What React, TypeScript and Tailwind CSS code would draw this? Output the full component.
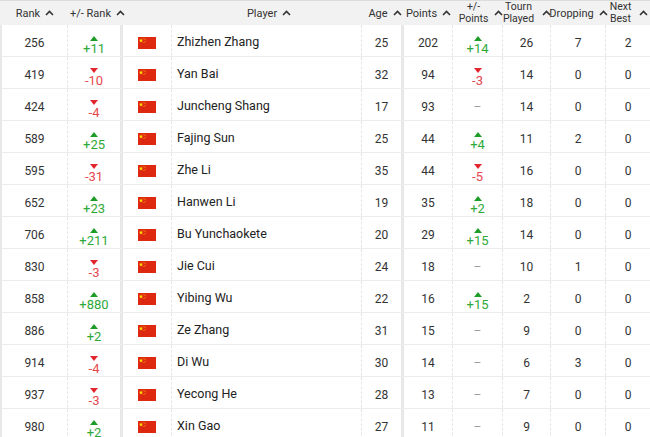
import React from "react"

type Row = {
  rank: number
  rankDelta: string
  name: string
  age: number
  points: number
  pointsDelta: string
  played: number
  dropping: number
  nextBest: number
}

const rows: Row[] = [
  { rank: 256, rankDelta: "+11", name: "Zhizhen Zhang", age: 25, points: 202, pointsDelta: "+14", played: 26, dropping: 7, nextBest: 2 },
  { rank: 419, rankDelta: "-10", name: "Yan Bai", age: 32, points: 94, pointsDelta: "-3", played: 14, dropping: 0, nextBest: 0 },
  { rank: 424, rankDelta: "-4", name: "Juncheng Shang", age: 17, points: 93, pointsDelta: "", played: 14, dropping: 0, nextBest: 0 },
  { rank: 589, rankDelta: "+25", name: "Fajing Sun", age: 25, points: 44, pointsDelta: "+4", played: 11, dropping: 2, nextBest: 0 },
  { rank: 595, rankDelta: "-31", name: "Zhe Li", age: 35, points: 44, pointsDelta: "-5", played: 16, dropping: 0, nextBest: 0 },
  { rank: 652, rankDelta: "+23", name: "Hanwen Li", age: 19, points: 35, pointsDelta: "+2", played: 18, dropping: 0, nextBest: 0 },
  { rank: 706, rankDelta: "+211", name: "Bu Yunchaokete", age: 20, points: 29, pointsDelta: "+15", played: 14, dropping: 0, nextBest: 0 },
  { rank: 830, rankDelta: "-3", name: "Jie Cui", age: 24, points: 18, pointsDelta: "", played: 10, dropping: 1, nextBest: 0 },
  { rank: 858, rankDelta: "+880", name: "Yibing Wu", age: 22, points: 16, pointsDelta: "+15", played: 2, dropping: 0, nextBest: 0 },
  { rank: 886, rankDelta: "+2", name: "Ze Zhang", age: 31, points: 15, pointsDelta: "", played: 9, dropping: 0, nextBest: 0 },
  { rank: 914, rankDelta: "-4", name: "Di Wu", age: 30, points: 14, pointsDelta: "", played: 6, dropping: 3, nextBest: 0 },
  { rank: 937, rankDelta: "-3", name: "Yecong He", age: 28, points: 13, pointsDelta: "", played: 7, dropping: 0, nextBest: 0 },
  { rank: 980, rankDelta: "+2", name: "Xin Gao", age: 27, points: 11, pointsDelta: "", played: 9, dropping: 0, nextBest: 0 },
]

const grid = "grid grid-cols-[66px_55px_49px_190px_42px_49px_50px_48px_55px_44px]"
const dashed = "border-r border-dashed border-[#e6e6e6]"
const thick = "border-r-[3px] border-solid border-[#e8e8e8]"

function Caret() {
  return (
    <svg width="9" height="6" viewBox="0 0 9 6" className="shrink-0">
      <polyline points="1,5 4.5,1.5 8,5" fill="none" stroke="#333" strokeWidth="1.6" />
    </svg>
  )
}

function Flag() {
  return (
    <svg width="18" height="12" viewBox="0 0 30 20">
      <rect width="30" height="20" fill="#de2910" />
      <polygon points="5,2 5.9,4.7 8.8,4.7 6.5,6.4 7.3,9.1 5,7.4 2.7,9.1 3.5,6.4 1.2,4.7 4.1,4.7" fill="#ffde00" />
      <circle cx="10" cy="2" r="0.8" fill="#ffde00" />
      <circle cx="12" cy="4" r="0.8" fill="#ffde00" />
      <circle cx="12" cy="7" r="0.8" fill="#ffde00" />
      <circle cx="10" cy="9" r="0.8" fill="#ffde00" />
    </svg>
  )
}

function Delta({ value }: { value: string }) {
  if (!value) {
    return <span className="text-[#9e9e9e] pt-[4px]">–</span>
  }
  const up = value.startsWith("+")
  return (
    <div className="flex flex-col items-center pt-[11px] self-start">
      <svg width="8" height="5" viewBox="0 0 8 5">
        {up ? <polygon points="0,5 4,0 8,5" fill="#1f9d2b" /> : <polygon points="0,0 8,0 4,5" fill="#e3262f" />}
      </svg>
      <span className={up ? "text-[#2fa83a] leading-[14px] text-[13px] pt-[1px]" : "text-[#e5484f] leading-[14px] text-[13px] pt-[1px]"}>{value}</span>
    </div>
  )
}

function Head({ children, className = "" }: { children: React.ReactNode; className?: string }) {
  return (
    <div className={"flex items-center justify-center gap-[5px] whitespace-nowrap " + className}>
      {children}
    </div>
  )
}

export default function App() {
  return (
    <div className="w-[650px] h-[437px] overflow-hidden bg-white text-[#333]" style={{ fontFamily: "Roboto, 'Liberation Sans', sans-serif" }}>
      <div className="border-t border-[#dcdcdc] bg-[#f2f2f2] h-[25px] pl-[2px] text-[11px] leading-[11px]">
        <div className={grid + " h-full"}>
          <Head>Rank <Caret /></Head>
          <Head className="pl-[4px]">+/- Rank <Caret /></Head>
          <div />
          <Head className="pl-[4px]">Player <Caret /></Head>
          <Head className="pl-[4px]">Age <Caret /></Head>
          <Head>Points <Caret /></Head>
          <Head className="gap-[6px] pl-[6px]">
            <span className="text-center text-[10.5px] leading-[12px]">+/-<br />Points</span>
            <Caret />
          </Head>
          <Head className="gap-[8px]">
            <span className="text-center text-[10.5px] leading-[12px]">Tourn<br />Played</span>
            <Caret />
          </Head>
          <Head>Dropping <Caret /></Head>
          <Head className="gap-[8px] pl-[2px]">
            <span className="text-center text-[10.5px] leading-[12px]">Next<br />Best</span>
            <Caret />
          </Head>
        </div>
      </div>
      <div className="border-l-2 border-[#e8e8e8] text-[12px]">
        {rows.map((r) => (
          <div key={r.rank} className={grid + " h-[32px] border-b border-[#ececec]"}>
            <div className={dashed + " flex items-center justify-center pt-[4px]"}>{r.rank}</div>
            <div className={thick + " flex justify-center"}>
              <Delta value={r.rankDelta} />
            </div>
            <div className={dashed + " flex items-center justify-center pt-[4px]"}>
              <Flag />
            </div>
            <div className={dashed + " flex items-center pl-[5px] pt-[4px] text-[12.5px] text-[#222]"}>{r.name}</div>
            <div className={thick + " flex items-center justify-center pt-[4px]"}>{r.age}</div>
            <div className={dashed + " flex items-center justify-center pt-[4px]"}>{r.points}</div>
            <div className={dashed + " flex items-center justify-center"}>
              <Delta value={r.pointsDelta} />
            </div>
            <div className={dashed + " flex items-center justify-center pt-[4px]"}>{r.played}</div>
            <div className={dashed + " flex items-center justify-center pt-[4px]"}>{r.dropping}</div>
            <div className="flex items-center justify-center pt-[4px]">{r.nextBest}</div>
          </div>
        ))}
      </div>
    </div>
  )
}
